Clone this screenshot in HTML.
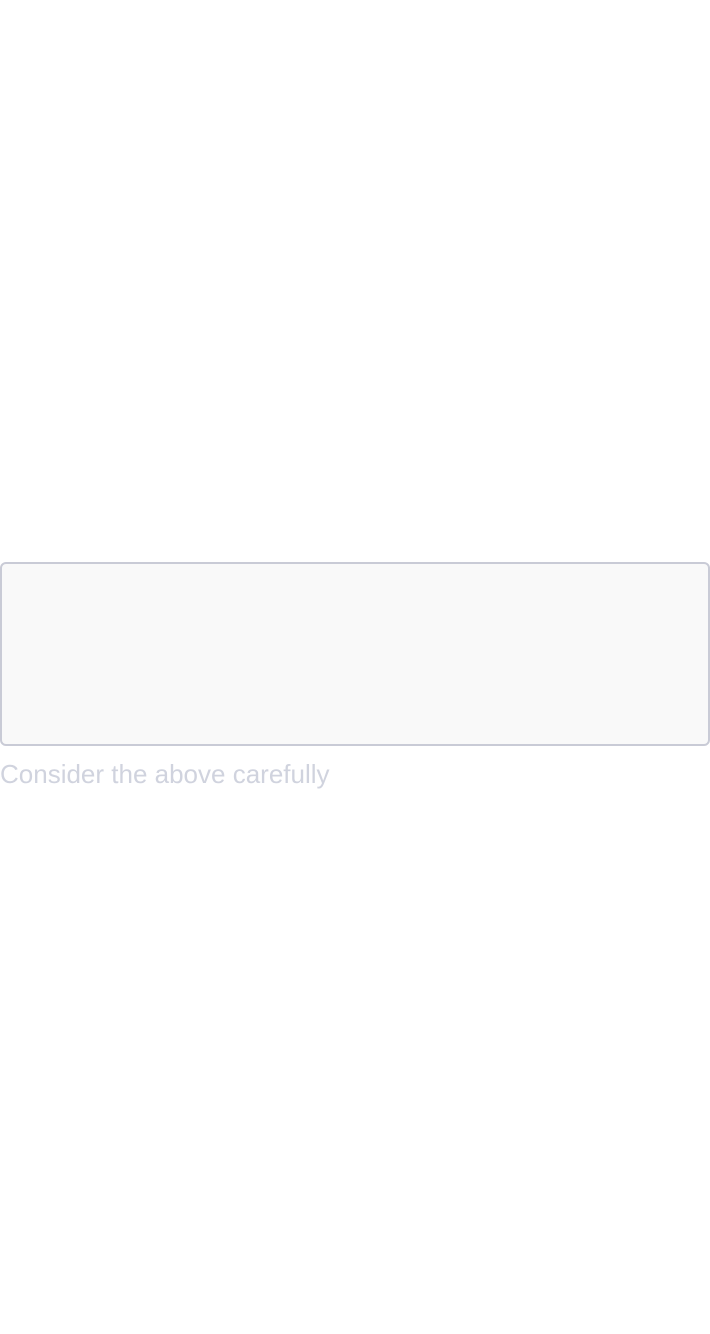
<!DOCTYPE html>
<html><head><meta charset="utf-8"><style>
html,body{margin:0;padding:0;background:#fff;width:710px;height:1334px;overflow:hidden}
.box{position:absolute;left:0;top:562px;width:706px;height:180px;border:2px solid #c9cbd6;border-radius:6px;background:#f9f9f9}
.t{position:absolute;left:0;top:759px;font-family:"Liberation Sans",sans-serif;font-size:26px;line-height:30px;color:#d0d3de;white-space:nowrap}
</style></head><body>
<div class="box"></div>
<div class="t">Consider the above carefully</div>
</body></html>
